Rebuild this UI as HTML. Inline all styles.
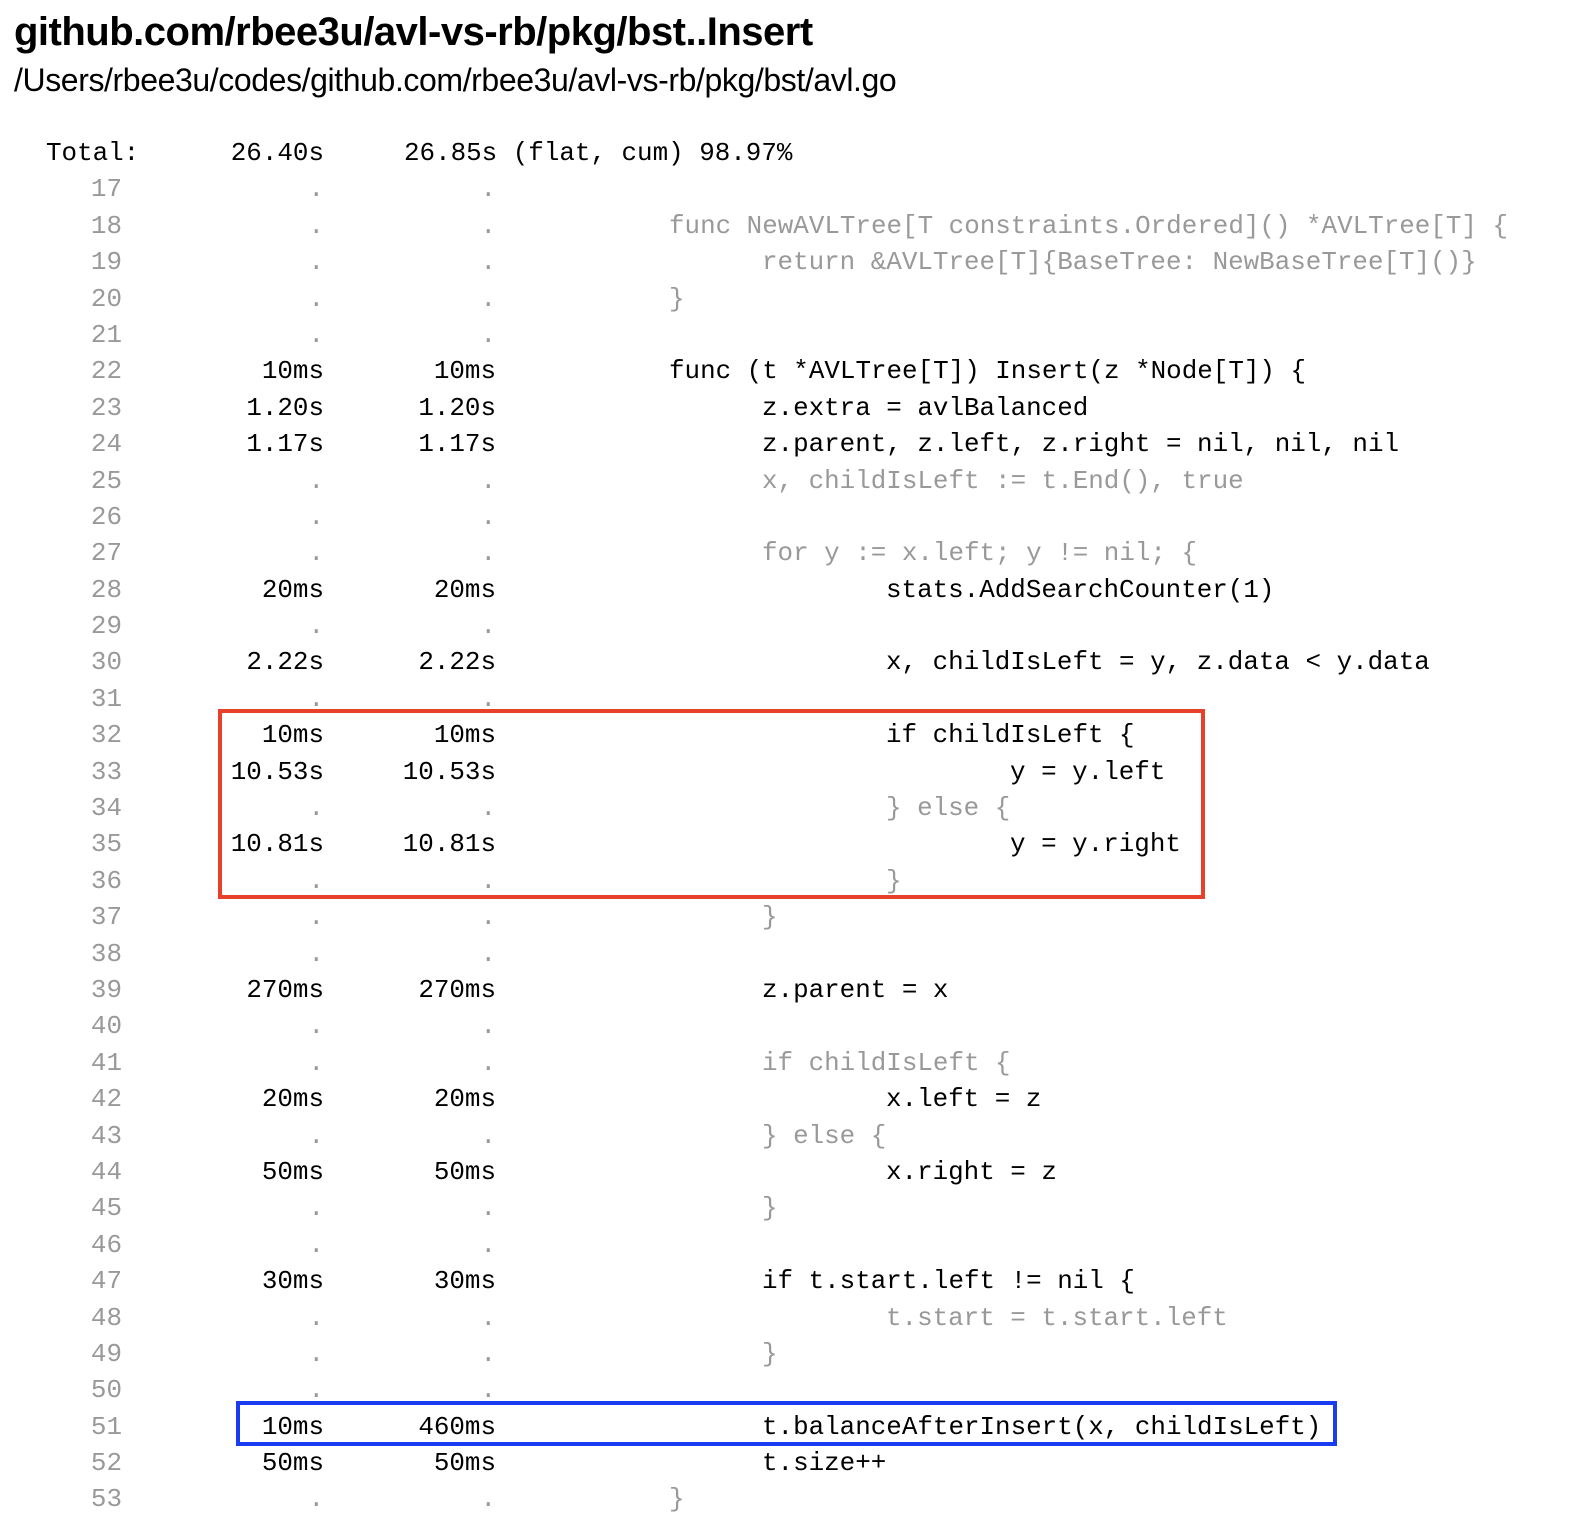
<!DOCTYPE html>
<html><head><meta charset="utf-8"><style>
html,body{margin:0;padding:0;background:#fff;width:1572px;height:1540px;overflow:hidden}
h1{position:absolute;left:14px;top:8px;margin:0;font:bold 40px "Liberation Sans",Arial,sans-serif;line-height:48px;color:#000;letter-spacing:-0.5px}
.sub{position:absolute;left:14px;top:61px;font:32px "Liberation Sans",Arial,sans-serif;line-height:38px;color:#000;letter-spacing:-0.4px}
#list{position:absolute;left:0;top:135px;width:1572px;font:25.9px "Liberation Mono","Courier New",monospace;color:#000}
.r{position:relative;height:36.4px;line-height:36.4px;white-space:pre}
.r span{position:absolute;top:0}
.n{left:0;width:122px;text-align:right;color:#999}
.f{left:0;width:324px;text-align:right}
.c{left:0;width:496px;text-align:right}
.d{color:#999}
.k{left:669px}
.k1{left:762px}.k2{left:886px}.k3{left:1010px}
.g{color:#999}
.box{position:absolute;box-sizing:border-box}
</style></head><body>
<h1>github.com/rbee3u/avl-vs-rb/pkg/bst..Insert</h1>
<div class="sub">/Users/rbee3u/codes/github.com/rbee3u/avl-vs-rb/pkg/bst/avl.go</div>
<div id="list">
<div class="r"><span style="left:46px">Total:</span><span class="f">26.40s</span><span style="left:404px">26.85s (flat, cum) 98.97%</span></div>
<div class="r"><span class="n">17</span><span class="f d">.</span><span class="c d">.</span></div>
<div class="r"><span class="n">18</span><span class="f d">.</span><span class="c d">.</span><span class="k g">func NewAVLTree[T constraints.Ordered]() *AVLTree[T] {</span></div>
<div class="r"><span class="n">19</span><span class="f d">.</span><span class="c d">.</span><span class="k1 g">return &amp;AVLTree[T]{BaseTree: NewBaseTree[T]()}</span></div>
<div class="r"><span class="n">20</span><span class="f d">.</span><span class="c d">.</span><span class="k g">}</span></div>
<div class="r"><span class="n">21</span><span class="f d">.</span><span class="c d">.</span></div>
<div class="r"><span class="n">22</span><span class="f">10ms</span><span class="c">10ms</span><span class="k">func (t *AVLTree[T]) Insert(z *Node[T]) {</span></div>
<div class="r"><span class="n">23</span><span class="f">1.20s</span><span class="c">1.20s</span><span class="k1">z.extra = avlBalanced</span></div>
<div class="r"><span class="n">24</span><span class="f">1.17s</span><span class="c">1.17s</span><span class="k1">z.parent, z.left, z.right = nil, nil, nil</span></div>
<div class="r"><span class="n">25</span><span class="f d">.</span><span class="c d">.</span><span class="k1 g">x, childIsLeft := t.End(), true</span></div>
<div class="r"><span class="n">26</span><span class="f d">.</span><span class="c d">.</span></div>
<div class="r"><span class="n">27</span><span class="f d">.</span><span class="c d">.</span><span class="k1 g">for y := x.left; y != nil; {</span></div>
<div class="r"><span class="n">28</span><span class="f">20ms</span><span class="c">20ms</span><span class="k2">stats.AddSearchCounter(1)</span></div>
<div class="r"><span class="n">29</span><span class="f d">.</span><span class="c d">.</span></div>
<div class="r"><span class="n">30</span><span class="f">2.22s</span><span class="c">2.22s</span><span class="k2">x, childIsLeft = y, z.data &lt; y.data</span></div>
<div class="r"><span class="n">31</span><span class="f d">.</span><span class="c d">.</span></div>
<div class="r"><span class="n">32</span><span class="f">10ms</span><span class="c">10ms</span><span class="k2">if childIsLeft {</span></div>
<div class="r"><span class="n">33</span><span class="f">10.53s</span><span class="c">10.53s</span><span class="k3">y = y.left</span></div>
<div class="r"><span class="n">34</span><span class="f d">.</span><span class="c d">.</span><span class="k2 g">} else {</span></div>
<div class="r"><span class="n">35</span><span class="f">10.81s</span><span class="c">10.81s</span><span class="k3">y = y.right</span></div>
<div class="r"><span class="n">36</span><span class="f d">.</span><span class="c d">.</span><span class="k2 g">}</span></div>
<div class="r"><span class="n">37</span><span class="f d">.</span><span class="c d">.</span><span class="k1 g">}</span></div>
<div class="r"><span class="n">38</span><span class="f d">.</span><span class="c d">.</span></div>
<div class="r"><span class="n">39</span><span class="f">270ms</span><span class="c">270ms</span><span class="k1">z.parent = x</span></div>
<div class="r"><span class="n">40</span><span class="f d">.</span><span class="c d">.</span></div>
<div class="r"><span class="n">41</span><span class="f d">.</span><span class="c d">.</span><span class="k1 g">if childIsLeft {</span></div>
<div class="r"><span class="n">42</span><span class="f">20ms</span><span class="c">20ms</span><span class="k2">x.left = z</span></div>
<div class="r"><span class="n">43</span><span class="f d">.</span><span class="c d">.</span><span class="k1 g">} else {</span></div>
<div class="r"><span class="n">44</span><span class="f">50ms</span><span class="c">50ms</span><span class="k2">x.right = z</span></div>
<div class="r"><span class="n">45</span><span class="f d">.</span><span class="c d">.</span><span class="k1 g">}</span></div>
<div class="r"><span class="n">46</span><span class="f d">.</span><span class="c d">.</span></div>
<div class="r"><span class="n">47</span><span class="f">30ms</span><span class="c">30ms</span><span class="k1">if t.start.left != nil {</span></div>
<div class="r"><span class="n">48</span><span class="f d">.</span><span class="c d">.</span><span class="k2 g">t.start = t.start.left</span></div>
<div class="r"><span class="n">49</span><span class="f d">.</span><span class="c d">.</span><span class="k1 g">}</span></div>
<div class="r"><span class="n">50</span><span class="f d">.</span><span class="c d">.</span></div>
<div class="r"><span class="n">51</span><span class="f">10ms</span><span class="c">460ms</span><span class="k1">t.balanceAfterInsert(x, childIsLeft)</span></div>
<div class="r"><span class="n">52</span><span class="f">50ms</span><span class="c">50ms</span><span class="k1">t.size++</span></div>
<div class="r"><span class="n">53</span><span class="f d">.</span><span class="c d">.</span><span class="k g">}</span></div>
</div>
<div class="box" style="left:218px;top:709px;width:987px;height:190px;border:4px solid #e8412a"></div>
<div class="box" style="left:236px;top:1401px;width:1101px;height:45px;border:4px solid #1a3cf0"></div>
</body></html>
